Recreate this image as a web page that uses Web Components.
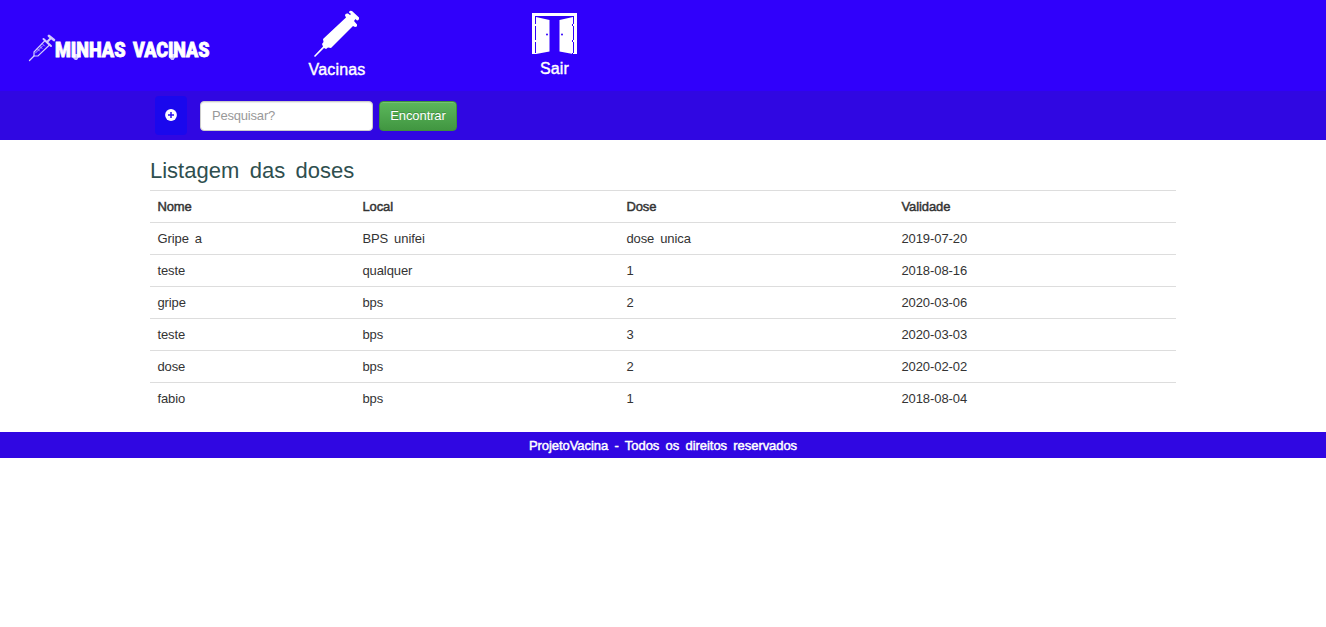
<!DOCTYPE html>
<html lang="pt-BR">
<head>
<meta charset="utf-8">
<title>Minhas Vacinas</title>
<style>
body{margin:0;background:#fff;color:#333;font:13px/20px "Liberation Sans",Arial,sans-serif}
</style>
</head>
<body>
<vac-app></vac-app>
<script>
function define(name, html, init) {
  const t = document.createElement('template');
  t.innerHTML = html;
  customElements.define(name, class extends HTMLElement {
    constructor() {
      super();
      this.attachShadow({mode: 'open'}).append(t.content.cloneNode(true));
      if (init) init(this.shadowRoot);
    }
  });
}

define('vac-logo', `<style>:host{display:block;width:200px;height:40px}svg{display:block;overflow:visible}</style>
<svg width="200" height="40" viewBox="26 28 200 40" role="img" aria-label="Minhas Vacinas">
 <g fill="none" stroke="#d3ccff" stroke-linecap="round">
  <path d="M29.5 60.5L34 56" stroke-width="1.3"/>
  <path d="M34 52L45 40.5L49.500 45L38 56L34 56Z" stroke-width="1.2"/>
  <path d="M37.500 49l2 2M40 46.500l2 2M42.500 44l2 2M35.500 53l7-7" stroke-width=".8"/>
  <path d="M43.500 39L51 46M47 42L51 38" stroke-width="2"/>
  <path d="M49 36L54 40" stroke-width="2.600"/>
 </g>
 <path d="M72.500 54h6.500v3l-2 3h-2l-2.500-2.500zM169 54h6.500v3l-2 3h-2l-2.500-2.500z" fill="#c9c0ff"/>
 <g font-family="Roboto" font-weight="900" font-size="20" fill="#fff" stroke="#fff" stroke-width=".8">
 <text x="55" y="56.500" textLength="70.500" lengthAdjust="spacingAndGlyphs">MINHAS</text>
 <text x="133" y="56.500" textLength="76.500" lengthAdjust="spacingAndGlyphs">VACINAS</text>
 </g>
</svg>`);

define('nav-item', `<style>:host{display:flex;flex-direction:column;align-items:center;color:#fff;font-size:16px;line-height:20px;-webkit-text-stroke:.4px #fff}
span{display:block}</style><slot name="icon"></slot><span><slot></slot></span>`);

define('icon-syringe', `<style>:host{display:block;width:46px;height:48px}svg{display:block}</style>
<svg width="46" height="48" viewBox="314 10 46 48">
 <path d="M314 56L323 46.500L322 44L323.500 42L323 39L346 17.500L345 15.500Q345 13 348 13.500L350 15L351 14L349 12.500Q349 10 352 11L359 17.500Q359.500 20 357 20.500L355.500 19L354 21L357 24.500Q357.500 27 355 27L353 26L331 48L328 47.500L326 49L324 48L315 57Z" fill="#fff"/>
</svg>`);

define('icon-door', `<style>:host{display:block;width:46px;height:43px}svg{display:block}</style>
<svg width="46" height="43" viewBox="532 12 46 43">
 <path fill="#fff" d="M532 13H577V54H532Z"/>
 <path fill="#3000fb" d="M535 16H574V54H535Z"/>
 <path fill="#fff" d="M536 17L549.500 20V51.500L536 54ZM573 17L559.500 20V51.500L573 54ZM534 24h3v2h-3zM534 40h3v2h-3zM572 24h3v2h-3zM572 40h3v2h-3zM534 53h3v1h-3zM572 53h3v1h-3z"/>
 <circle cx="547" cy="34.500" r="1" fill="#3000fb"/><circle cx="562" cy="34.500" r="1" fill="#3000fb"/>
</svg>`);

define('top-bar', `<style>
:host{display:grid;grid-template-columns:226px 222px 213px;height:91px;background:#3000fb}
vac-logo{margin:28px 0 0 26px}
nav-item.v{padding-top:10px}nav-item.s{padding-top:12px}
nav-item{letter-spacing:.15px}
icon-syringe{margin-bottom:2px}icon-door{margin-bottom:4px}
</style><vac-logo></vac-logo>
<nav-item class="v"><icon-syringe slot="icon"></icon-syringe>Vacinas</nav-item>
<nav-item class="s"><icon-door slot="icon"></icon-door>Sair</nav-item>`);

define('search-bar', `<style>
:host{display:flex;align-items:flex-start;box-sizing:border-box;height:49px;background:#3007e2;padding:5px 0 0 155px}
.add{display:flex;align-items:center;justify-content:center;width:32px;height:39px;border:0;padding:0 0 1px;border-radius:4px;background:#1a08ed}
input,.go{box-sizing:border-box;height:30px;margin-top:5px;font:13px/20px "Liberation Sans",Arial,sans-serif;border-radius:4px}
input{width:173px;margin-left:13px;border:1px solid #ccc;padding:3px 11px 5px;letter-spacing:-.2px;background:#fff;box-shadow:inset 0 1px 1px rgba(0,0,0,.075)}
input::placeholder{color:#999;opacity:1}
.go{width:78px;margin-left:6px;padding:4px 0;letter-spacing:-.1px;border:1px solid #3e8f3e;background:linear-gradient(#5cb85c,#419641);color:#fff;text-shadow:0 -1px 0 rgba(0,0,0,.2);box-shadow:inset 0 1px 0 rgba(255,255,255,.15)}
</style>
<button class="add" aria-label="Adicionar"><svg width="12" height="12" viewBox="0 0 12 12"><circle cx="6" cy="6" r="5.900" fill="#fff"/><path d="M6 3v6M3 6h6" stroke="#2a10f0" stroke-width="1.500"/></svg></button>
<input type="text" placeholder="Pesquisar?"><button class="go">Encontrar</button>`);

define('dose-table', `<style>
:host{display:block;width:1026px}
h2{margin:0;height:50px;box-sizing:border-box;padding-top:18px;font-size:22px;line-height:26px;font-weight:400;color:#2f4f4f;word-spacing:4.300px}
table{width:1026px;border-collapse:separate;border-spacing:0;table-layout:fixed}
th,td{box-sizing:border-box;height:32px;padding:3px 7px 2px 7.4px;border-top:1px solid #ddd;text-align:left;font-weight:400;line-height:20px;letter-spacing:-.08px;word-spacing:2.400px}
th{-webkit-text-stroke:.45px #333}
</style><h2>Listagem das doses</h2>
<table><colgroup><col style="width:205px"><col style="width:264px"><col style="width:275px"><col></colgroup>
<thead><tr><th>Nome</th><th>Local</th><th>Dose</th><th>Validade</th></tr></thead><tbody></tbody></table>`, root => {
  const rows = [
    ['Gripe a', 'BPS unifei', 'dose unica', '2019-07-20'],
    ['teste', 'qualquer', '1', '2018-08-16'],
    ['gripe', 'bps', '2', '2020-03-06'],
    ['teste', 'bps', '3', '2020-03-03'],
    ['dose', 'bps', '2', '2020-02-02'],
    ['fabio', 'bps', '1', '2018-08-04']
  ];
  const body = root.querySelector('tbody');
  for (const r of rows) {
    const tr = document.createElement('tr');
    for (const c of r) {
      const td = document.createElement('td');
      td.textContent = c;
      tr.append(td);
    }
    body.append(tr);
  }
});

define('page-footer', `<style>:host{display:block;height:26px;line-height:27px;background:#3007e2;color:#fff;text-align:center;letter-spacing:-.06px;word-spacing:2.800px;-webkit-text-stroke:.45px #fff}</style><slot></slot>`);

define('vac-app', `<style>:host{display:block}dose-table{margin:0 0 18px 150px}</style>
<top-bar></top-bar><search-bar></search-bar><dose-table></dose-table>
<page-footer>ProjetoVacina - Todos os direitos reservados</page-footer>`);
</script>
</body>
</html>
